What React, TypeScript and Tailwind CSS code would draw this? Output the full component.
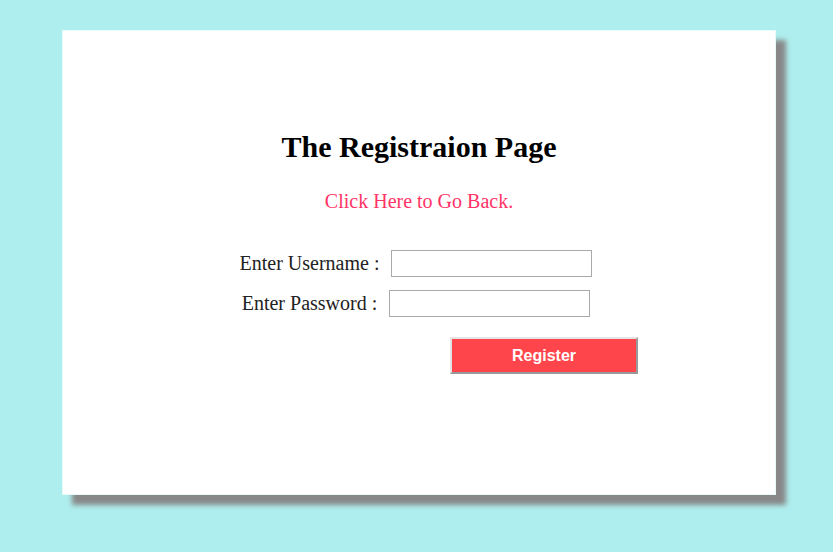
export default function App() {
  return (
    <div className="w-[833px] h-[552px] bg-[#afeeee] overflow-hidden pt-[30px] font-['Liberation_Serif',serif]">
      <div className="ml-[62px] w-[714px] h-[465px] bg-white border border-[#e6fafa] shadow-[10px_10px_5px_#888] flex flex-col items-center">
        <h1 className="mt-[99px] text-[30px] leading-[34px] font-bold text-black">The Registraion Page</h1>
        <a href="#" className="mt-[26px] text-[20px] leading-[23px] text-[#ff3366]">Click Here to Go Back.</a>
        <div className="mt-[35px] mr-[6px] h-[30px] flex items-center gap-3">
          <label className="text-[20px] leading-[30px] text-[#222]">Enter Username :</label>
          <input type="text" className="w-[201px] h-[27px] border border-[#aaa] bg-white" />
        </div>
        <div className="mt-[10px] mr-[6px] h-[30px] flex items-center gap-3">
          <label className="text-[20px] leading-[30px] text-[#222]">Enter Password :</label>
          <input type="password" className="w-[201px] h-[27px] border border-[#aaa] bg-white" />
        </div>
        <div className="w-[714px] flex">
          <button className="ml-[388px] mt-[19px] w-[188px] h-[37px] bg-[#ff454c] border-2 border-t-[#e4e4e4] border-l-[#e4e4e4] border-b-[#999] border-r-[#999] text-white font-bold text-[16px] font-['Liberation_Sans',sans-serif]">
            Register
          </button>
        </div>
      </div>
    </div>
  );
}
